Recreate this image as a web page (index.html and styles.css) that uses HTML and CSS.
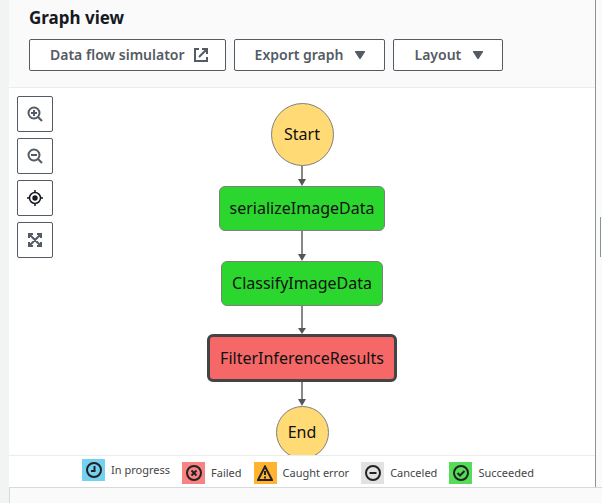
FILE: index.html
```html
<!DOCTYPE html>
<html lang="en">
<head>
<meta charset="utf-8">
<title>Graph view</title>
<link rel="stylesheet" href="styles.css">
</head>
<body>
<div class="workspace">
  <section class="panel">
    <header class="panel-header">
      <h2 class="title">Graph view</h2>
      <div class="actions">
        <button class="btn" type="button">Data flow simulator
          <svg class="ext" width="16" height="16" viewBox="0 0 16 16"><path d="M6 2H2v12h12v-4M9 2h5v5M14 2L6 10"/></svg>
        </button>
        <button class="btn menu" type="button">Export graph
          <svg class="caret" width="16" height="16" viewBox="0 0 16 16"><path d="M3 4h10v1L8.500 12h-1L3 5z"/></svg>
        </button>
        <button class="btn menu" type="button">Layout
          <svg class="caret" width="16" height="16" viewBox="0 0 16 16"><path d="M3 4h10v1L8.500 12h-1L3 5z"/></svg>
        </button>
      </div>
    </header>
    <div class="canvas">
      <div class="tools">
        <button class="tool" type="button" aria-label="Zoom in"><svg width="16" height="16" viewBox="0 0 16 16"><circle cx="7" cy="7" r="5.500"/><path d="M11 11l4 4M7 4v6M4 7h6"/></svg></button>
        <button class="tool" type="button" aria-label="Zoom out"><svg width="16" height="16" viewBox="0 0 16 16"><circle cx="7" cy="7" r="5.500"/><path d="M11 11l4 4M4 7h6"/></svg></button>
        <button class="tool tool-center" type="button" aria-label="Center"><svg width="16" height="16" viewBox="0 0 16 16"><circle cx="8" cy="8" r="5.500"/><circle class="dot" cx="8" cy="8" r="2.700"/><path d="M8 0v3M8 13v3M0 8h3M13 8h3"/></svg></button>
        <button class="tool" type="button" aria-label="Fit to view"><svg width="16" height="16" viewBox="0 0 16 16"><path d="M2 6V2h4M10 2h4v4M14 10v4h-4M6 14H2v-4M2 2l12 12M14 2L2 14"/></svg></button>
      </div>
      <div class="flow">
        <div class="node start">Start</div>
        <svg class="arrow" width="8" height="20" viewBox="0 0 8 20"><path class="line" d="M4 0v14"/><path d="M0 13h8L4 20z"/></svg>
        <div class="node ok">serializeImageData</div>
        <svg class="arrow" width="8" height="30" viewBox="0 0 8 30"><path class="line" d="M4 0v24"/><path d="M0 23h8L4 30z"/></svg>
        <div class="node ok">ClassifyImageData</div>
        <svg class="arrow" width="8" height="28" viewBox="0 0 8 28"><path class="line" d="M4 0v23"/><path d="M0 22h8L4 28z"/></svg>
        <div class="node failed">FilterInferenceResults</div>
        <svg class="arrow" width="8" height="24" viewBox="0 0 8 24"><path class="line" d="M4 0v18"/><path d="M0 17h8L4 24z"/></svg>
        <div class="node end">End</div>
      </div>
    </div>
    <ul class="legend">
      <li class="key raised"><span class="swatch blue"><svg width="16" height="16" viewBox="0 0 16 16"><circle cx="8" cy="8" r="7"/><path d="M8.500 4v5H5"/></svg></span>In progress</li>
      <li class="key"><span class="swatch red"><svg width="16" height="16" viewBox="0 0 16 16"><circle cx="8" cy="8" r="7"/><path d="M5.500 5.500l5 5M10.500 5.500l-5 5"/></svg></span>Failed</li>
      <li class="key"><span class="swatch orange"><svg width="16" height="16" viewBox="0 0 16 16"><path d="M8 1.500L15 15H1zM8 6v4M8 11.500v2"/></svg></span>Caught error</li>
      <li class="key"><span class="swatch grey"><svg width="16" height="16" viewBox="0 0 16 16"><circle cx="8" cy="8" r="7"/><path d="M4.500 8h7"/></svg></span>Canceled</li>
      <li class="key"><span class="swatch green"><svg width="16" height="16" viewBox="0 0 16 16"><circle cx="8" cy="8" r="7"/><path d="M4.500 8l2.500 2.500 4.500-4.500"/></svg></span>Succeeded</li>
    </ul>
  </section>
  <div class="divider"><span class="grip"></span></div>
</div>
<footer class="lower"></footer>
</body>
</html>
```
FILE: styles.css
```css
* { box-sizing: border-box; }
body {
  margin: 0;
  height: 100vh;
  display: flex;
  flex-direction: column;
  padding-left: 9px;
  overflow: hidden;
  background: #f2f3f3;
  color: #16191f;
  font-family: "Noto Sans", "Open Sans", sans-serif;
}
.workspace { flex: 1; min-height: 0; display: flex; }
.panel { flex: 1; min-width: 0; display: flex; flex-direction: column; background: #fff; }
.panel-header { padding: 6px 20px 16px; background: #fafafa; border-bottom: 1px solid #eaeded; }
.title { margin: 0 0 9px; font-size: 17px; line-height: 24px; font-weight: 700; }
.actions { display: flex; gap: 8px; }
.btn {
  display: flex;
  align-items: center;
  gap: 8px;
  height: 32px;
  padding: 0 16px 0 20px;
  border: 1px solid #545b64;
  border-radius: 2px;
  background: #fff;
  color: #545b64;
  font: 600 14px/22px "Noto Sans", "Open Sans", sans-serif;
  white-space: nowrap;
}
.menu { gap: 9px; }
.ext { fill: none; stroke: currentColor; stroke-width: 2; }
.caret { fill: currentColor; }
.canvas { position: relative; flex: 1; min-height: 0; overflow: hidden; }
.tools { position: absolute; top: 8px; left: 8px; display: grid; gap: 6px; }
.tool {
  display: grid;
  place-items: center;
  width: 36px;
  height: 36px;
  padding: 0;
  border: 1px solid #545b64;
  border-radius: 2px;
  background: #fff;
  color: #545b64;
}
.tool svg { fill: none; stroke: currentColor; stroke-width: 2; }
.tool-center { color: #16191f; }
.tool-center svg { stroke-width: 1.5; }
.tool-center .dot { fill: currentColor; stroke: none; }
.flow { display: flex; flex-direction: column; align-items: center; padding-top: 15px; }
.node {
  flex: none;
  display: grid;
  place-items: center;
  height: 45px;
  padding: 0 10px 1px;
  border: 1px solid #7f7f7f;
  border-radius: 6px;
  color: #111;
  font-size: 16px;
  line-height: 22px;
}
.start, .end { padding: 0 0 1px; border-radius: 50%; background: #ffda75; }
.start { width: 63px; height: 63px; }
.end { width: 53px; height: 53px; }
.ok { background: #2bd62e; }
.failed { height: 48px; border: 3px solid #444; background: #f66767; }
.arrow { flex: none; fill: #555; }
.line { fill: none; stroke: #888; stroke-width: 2; }
.legend {
  display: flex;
  justify-content: center;
  gap: 12px;
  height: 32px;
  margin: 0;
  padding: 6px 0 0 12px;
  border-top: 1px solid #eaeded;
  list-style: none;
  font-size: 11px;
  line-height: 22px;
  color: #444;
  white-space: nowrap;
}
.key { display: flex; gap: 6px; height: 22px; }
.raised { margin-top: -3px; }
.swatch { display: grid; place-items: center; width: 23px; height: 22px; }
.swatch svg { fill: none; stroke: #222; stroke-width: 2; }
.blue { background: #75d1f0; }
.red { background: #f98383; }
.orange { background: #ffb330; }
.grey { background: #e2e2e2; }
.green { background: #55dd58; }
.divider { display: flex; align-items: center; justify-content: flex-end; width: 7px; padding: 0 1px 14px 0; background: #fafafa; border-left: 1px solid #879596; }
.grip { width: 1px; height: 40px; background: #879596; }
.lower { height: 16px; background: #fafafa; border-top: 1px solid #d5dbdb; border-left: 1px solid #d5dbdb; }
```
